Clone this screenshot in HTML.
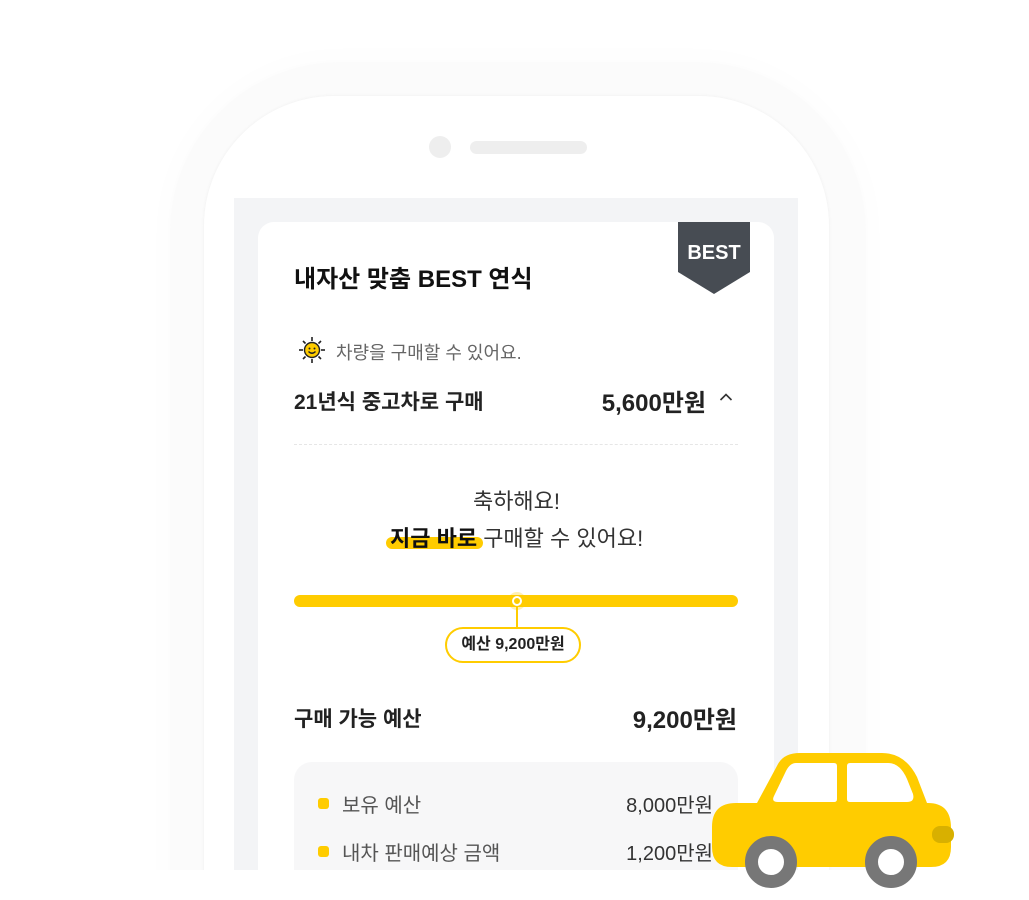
<!DOCTYPE html>
<html><head><meta charset="utf-8"><style>
*{margin:0;padding:0;box-sizing:border-box}
body{width:1029px;height:900px;background:#fff;position:relative;overflow:hidden;font-family:"Liberation Sans","Noto Sans CJK KR",sans-serif;color:#222}
.clip{position:absolute;left:0;top:0;width:1029px;height:870px;overflow:hidden}
.glow{position:absolute;left:170px;top:62px;width:696px;height:1000px;border-radius:170px;background:#fbfbfb;box-shadow:0 0 25px 8px #fdfdfd}
.bezel{position:absolute;left:204px;top:96px;width:625px;height:1000px;border-radius:130px;background:#fff;box-shadow:0 0 2px 1px #f4f4f4}
.cam{position:absolute;left:429px;top:136px;width:22px;height:22px;border-radius:50%;background:#eee}
.spk{position:absolute;left:470px;top:141px;width:117px;height:13px;border-radius:7px;background:#eee}
.screen{position:absolute;left:234px;top:198px;width:564px;height:700px;background:#f3f4f6}
.card{position:absolute;left:258px;top:222px;width:516px;height:700px;background:#fff;border-radius:16px}
.t{position:absolute;white-space:nowrap}
.badge{position:absolute;left:678px;top:222px;width:72px;height:72px}
</style></head><body>
<div class="clip">
<div class="glow"></div>
<div class="bezel"></div>
<div class="cam"></div><div class="spk"></div>
<div class="screen"></div>
<div class="card"></div>
<svg class="badge" viewBox="0 0 72 72"><polygon points="0,0 72,0 72,50 36,72 0,50" fill="#474c53"/><text x="36" y="37" font-size="20" font-weight="bold" fill="#fff" text-anchor="middle" font-family="Liberation Sans, sans-serif">BEST</text></svg>
<div class="t" style="left:294px;top:259px;font-size:24px;font-weight:bold;color:#111">내자산 맞춤 BEST 연식</div>
<svg style="position:absolute;left:298px;top:336px" width="28" height="28" viewBox="0 0 28 28"><g stroke="#222" stroke-width="1.6"><line x1="14" y1="1" x2="14" y2="5"/><line x1="14" y1="23" x2="14" y2="27"/><line x1="1" y1="14" x2="5" y2="14"/><line x1="23" y1="14" x2="27" y2="14"/><line x1="5" y1="5" x2="7.5" y2="7.5"/><line x1="23" y1="5" x2="20.5" y2="7.5"/><line x1="5" y1="23" x2="7.5" y2="20.5"/><line x1="23" y1="23" x2="20.5" y2="20.5"/></g><circle cx="14" cy="14" r="7.5" fill="#ffcc00" stroke="#222" stroke-width="1.4"/><circle cx="11.5" cy="12.5" r="1" fill="#222"/><circle cx="16.5" cy="12.5" r="1" fill="#222"/><path d="M10.5 15.5 Q14 19 17.5 15.5" stroke="#222" stroke-width="1.3" fill="none"/></svg>
<div class="t" style="left:336px;top:339px;font-size:18px;color:#666">차량을 구매할 수 있어요.</div>
<div class="t" style="left:294px;top:386px;font-size:21px;font-weight:bold;color:#222">21년식 중고차로 구매</div>
<div class="t" style="right:323px;top:383px;font-size:24px;font-weight:bold;color:#222">5,600만원</div>
<svg style="position:absolute;left:719px;top:392px" width="14" height="10"><path d="M1.5 8 L7 2.5 L12.5 8" stroke="#333" stroke-width="1.6" fill="none"/></svg>
<div style="position:absolute;left:294px;top:444px;width:444px;border-top:1px dashed #e6e6e6"></div>
<div class="t" style="left:0;width:1029px;text-align:center;top:484px;font-size:22px;color:#333"><span style="position:relative;left:2px">축하해요!</span></div>
<div style="position:absolute;left:386px;top:537px;width:97px;height:12px;border-radius:6px;background:#ffcc00"></div>
<div class="t" style="left:390px;top:521px;font-size:22px;color:#333"><b style="color:#111">지금 바로</b> 구매할 수 있어요!</div>
<div style="position:absolute;left:294px;top:595px;width:444px;height:12px;border-radius:6px;background:#ffcc00"></div>
<div style="position:absolute;left:508px;top:592px;width:18px;height:18px;border-radius:50%;background:rgba(255,204,0,.3)"></div>
<div style="position:absolute;left:512px;top:596px;width:10px;height:10px;border-radius:50%;background:#ffcc00;border:2px solid #fff"></div>
<div style="position:absolute;left:516px;top:606px;width:2px;height:22px;background:#ffcc00"></div>
<div style="position:absolute;left:445px;top:627px;width:136px;height:36px;border:2px solid #ffcc00;border-radius:18px;background:#fff;font-size:16px;font-weight:bold;color:#222;text-align:center;line-height:32px">예산 9,200만원</div>
<div class="t" style="left:294px;top:703px;font-size:21px;font-weight:bold;color:#222">구매 가능 예산</div>
<div class="t" style="right:292px;top:700px;font-size:24px;font-weight:bold;color:#222">9,200만원</div>
<div style="position:absolute;left:294px;top:762px;width:444px;height:200px;border-radius:18px;background:#f7f7f8"></div>
<div style="position:absolute;left:318px;top:798px;width:11px;height:11px;border-radius:3px;background:#ffcc00"></div>
<div class="t" style="left:342px;top:789px;font-size:20px;color:#555">보유 예산</div>
<div class="t" style="right:316px;top:789px;font-size:20px;color:#333">8,000만원</div>
<div style="position:absolute;left:318px;top:846px;width:11px;height:11px;border-radius:3px;background:#ffcc00"></div>
<div class="t" style="left:342px;top:837px;font-size:20px;color:#555">내차 판매예상 금액</div>
<div class="t" style="right:316px;top:837px;font-size:20px;color:#333">1,200만원</div>
</div>
<svg style="position:absolute;left:710px;top:752px" width="244" height="140" viewBox="0 0 244 140">
<path d="M47 51 L68 12 Q74 1 90 1 H172 Q195 1 207 25 L217 51 H218 Q241 51 241 76 V95 Q241 115 221 115 H22 Q2 115 2 95 V75 Q2 51 26 51 Z" fill="#ffcc00"/>
<path d="M86 11 H124 Q127 11 127 14 V47 Q127 50 124 50 H68 Q61 50 64 44 L76 19 Q80 11 86 11 Z" fill="#fff"/>
<path d="M140 11 H178 Q190 11 197 27 L203 42 Q205 50 197 50 H140 Q137 50 137 47 V14 Q137 11 140 11 Z" fill="#fff"/>
<rect x="222" y="74" width="22" height="17" rx="8" fill="#d8b000"/>
<circle cx="61" cy="110" r="19.5" fill="#fff" stroke="#777" stroke-width="13"/>
<circle cx="181" cy="110" r="19.5" fill="#fff" stroke="#777" stroke-width="13"/>
</svg>
</body></html>
